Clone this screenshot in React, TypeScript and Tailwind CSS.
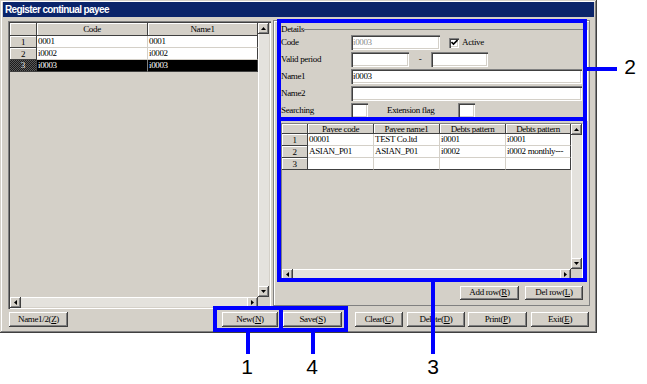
import type { ReactNode } from "react";

const raised =
  "bg-[#d4d0c8] shadow-[inset_-1px_-1px_#404040,inset_1px_1px_#fff,inset_-2px_-2px_#808080]";
const sunken =
  "bg-white shadow-[inset_1px_1px_#808080,inset_2px_2px_#404040,inset_-1px_-1px_#fff,inset_-2px_-2px_#d4d0c8]";
const serif = "font-['Liberation_Serif',serif] text-[9px] tracking-[-0.35px]";

function Arrow({ dir }: { dir: "up" | "down" | "left" | "right" }) {
  const pts = {
    up: "2.5,0 5,3 0,3",
    down: "0,0 5,0 2.5,3",
    left: "3,0 3,5 0,2.5",
    right: "0,0 3,2.5 0,5",
  }[dir];
  const vertical = dir === "up" || dir === "down";
  return (
    <div className={`${raised} w-[11px] h-[11px] shrink-0 flex items-center justify-center`}>
      <svg width={vertical ? 5 : 3} height={vertical ? 3 : 5}>
        <polygon points={pts} fill="#000" />
      </svg>
    </div>
  );
}

function VScroll() {
  return (
    <div className="w-[11px] flex flex-col shrink-0">
      <Arrow dir="up" />
      <div className="flex-1 bg-[#e4e2dd] border-l border-white" />
      <Arrow dir="down" />
    </div>
  );
}

function HScroll() {
  return (
    <div className="flex flex-1 h-full">
      <Arrow dir="left" />
      <div className="flex-1 bg-[#e4e2dd] border-t border-white" />
      <Arrow dir="right" />
    </div>
  );
}

function Btn({ children, className }: { children: ReactNode; className: string }) {
  return (
    <div className={`${raised} ${serif} text-black flex items-center justify-center shrink-0 ${className}`}>
      {children}
    </div>
  );
}

function Head({ children, className }: { children?: ReactNode; className: string }) {
  return (
    <div
      className={`bg-[#d4d0c8] shadow-[inset_1px_1px_#fff] border-r border-b border-[#404040] ${serif} text-black leading-[10px] flex items-center justify-center overflow-hidden shrink-0 ${className}`}
    >
      {children}
    </div>
  );
}

function Cell({ children, className }: { children?: ReactNode; className: string }) {
  return (
    <div
      className={`border-r border-b border-[#d4d0c8] ${serif} text-black leading-[11px] pl-[1px] whitespace-nowrap overflow-hidden shrink-0 ${className}`}
    >
      {children}
    </div>
  );
}

function Field({ children, className }: { children?: ReactNode; className: string }) {
  return (
    <div className={`${sunken} h-[15px] ${serif} leading-[15px] pl-[2px] shrink-0 ${className}`}>
      {children}
    </div>
  );
}

function LeftGrid() {
  const rows = [
    { n: "1", code: "0001", name: "0001" },
    { n: "2", code: "i0002", name: "i0002" },
  ];
  return (
    <div className="ml-[5px] mt-[1px] w-[263px] h-[288px] p-[2px] shadow-[inset_1px_1px_#808080,inset_2px_2px_#404040,inset_-1px_-1px_#fff,inset_-2px_-2px_#d4d0c8] flex flex-col">
      <div className="flex flex-1">
        <div className="flex-1 flex flex-col">
          <div className="flex h-[13px]">
            <Head className="w-[27px] h-[13px]" />
            <Head className="w-[111px] h-[13px]">Code</Head>
            <Head className="w-[110px] h-[13px]">Name1</Head>
          </div>
          {rows.map((r) => (
            <div key={r.n} className="flex h-[12px]">
              <Head className="w-[27px] h-[12px]">{r.n}</Head>
              <Cell className="w-[111px] h-[12px] bg-white">{r.code}</Cell>
              <Cell className="w-[110px] h-[12px] bg-white border-r-[#404040]">{r.name}</Cell>
            </div>
          ))}
          <div className="flex h-[12px]">
            <div className="w-[27px] h-[12px] bg-[image:repeating-conic-gradient(#1a1a1a_0%_25%,#5a5a5a_0%_50%)] bg-[length:2px_2px] border-r border-b border-[#404040] font-['Liberation_Serif',serif] text-[9px] text-[#e8e8e8] leading-[11px] text-center">
              3
            </div>
            <div className="w-[111px] h-[12px] bg-black border-r border-b border-[#808080] border-b-[#404040] font-['Liberation_Serif',serif] text-[9px] tracking-[-0.35px] text-white leading-[11px] pl-[1px]">
              i0003
            </div>
            <div className="w-[110px] h-[12px] bg-black border-r border-b border-[#404040] font-['Liberation_Serif',serif] text-[9px] tracking-[-0.35px] text-white leading-[11px] pl-[1px]">
              i0003
            </div>
          </div>
        </div>
        <VScroll />
      </div>
      <div className="flex h-[10px]">
        <HScroll />
        <div className="w-[11px] bg-[#d4d0c8]" />
      </div>
    </div>
  );
}

function RightGrid() {
  const rows = [
    ["1", "00001", "TEST Co.ltd", "i0001", "i0001"],
    ["2", "ASIAN_P01", "ASIAN_P01", "i0002", "i0002 monthly---"],
    ["3", "", "", "", ""],
  ];
  return (
    <div className="ml-[7px] mt-[3px] w-[302px] h-[156px] border border-t-[#808080] border-l-[#808080] border-r-white border-b-white flex flex-col">
      <div className="flex flex-1">
        <div className="flex-1 flex flex-col">
          <div className="flex h-[10px]">
            <Head className="w-[26px] h-[10px]" />
            <Head className="w-[66px] h-[10px]">Payee code</Head>
            <Head className="w-[66px] h-[10px]">Payee name1</Head>
            <Head className="w-[66px] h-[10px]">Debts pattern</Head>
            <Head className="w-[65px] h-[10px]">Debts pattern</Head>
          </div>
          {rows.map((r, i) => (
            <div key={r[0]} className="flex h-[12px]">
              <Head className="w-[26px] h-[12px]">{r[0]}</Head>
              {r.slice(1).map((c, j) => (
                <Cell
                  key={j}
                  className={`h-[12px] bg-white ${j === 3 ? "w-[65px] border-r-[#404040]" : "w-[66px]"} ${i === 2 ? "border-b-[#404040]" : ""}`}
                >
                  {c}
                </Cell>
              ))}
            </div>
          ))}
        </div>
        <VScroll />
      </div>
      <div className="flex h-[9px]">
        <HScroll />
        <div className="w-[11px] bg-[#d4d0c8]" />
      </div>
    </div>
  );
}

function Details() {
  return (
    <fieldset className="ml-[5px] mt-[3px] w-[308px] border border-[#808080] shadow-[1px_1px_#fff] px-[1px] pb-[1px]">
      <legend className={`${serif} text-black leading-[10px]`}>Details</legend>
      <div className="mt-[1px] flex flex-col gap-[2px]">
        <div className="flex items-center h-[15px]">
          <div className={`${serif} text-black w-[70px]`}>Code</div>
          <Field className="w-[89px] text-[#8a8a8a]">i0003</Field>
          <div className={`${sunken} ml-[9px] w-[10px] h-[10px] flex items-center justify-center`}>
            <svg width="7" height="7" viewBox="0 0 7 7">
              <path d="M0.5 3 L2.5 5 L6.5 1" stroke="#000" strokeWidth="1.6" fill="none" />
            </svg>
          </div>
          <div className={`${serif} text-black ml-[3px]`}>Active</div>
        </div>
        <div className="flex items-center h-[15px]">
          <div className={`${serif} text-black w-[70px]`}>Valid period</div>
          <Field className="w-[58px]" />
          <div className={`${serif} text-black w-[22px] text-center`}>-</div>
          <Field className="w-[57px]" />
        </div>
        <div className="flex items-center h-[15px]">
          <div className={`${serif} text-black w-[70px]`}>Name1</div>
          <Field className="w-[231px] text-black">i0003</Field>
        </div>
        <div className="flex items-center h-[15px]">
          <div className={`${serif} text-black w-[70px]`}>Name2</div>
          <Field className="w-[231px]" />
        </div>
        <div className="flex items-center h-[15px]">
          <div className={`${serif} text-black w-[70px]`}>Searching</div>
          <Field className="w-[17px]" />
          <div className={`${serif} text-black ml-[19px] w-[71px]`}>Extension flag</div>
          <Field className="w-[17px]" />
        </div>
      </div>
    </fieldset>
  );
}

export default function App() {
  return (
    <div className="w-[647px] h-[384px] bg-white relative overflow-hidden">
      {/* Dialog window */}
      <div className="w-[597px] h-[333px] bg-[#d4d0c8] pt-[2px] px-[3px] flex flex-col shadow-[inset_-1px_-1px_#404040,inset_1px_1px_#d4d0c8,inset_-2px_-2px_#808080,inset_2px_2px_#fff]">
        <div className="h-[15px] bg-[#0a246a] pl-[2px] flex items-center font-['Liberation_Sans',Arial,sans-serif] font-bold text-[10px] tracking-[-0.6px] text-white">
          Register continual payee
        </div>

        <div className="flex items-start pt-[3px] h-[292px]">
          <LeftGrid />

          {/* Right frame */}
          <div className="ml-[2px] w-[317px] h-[286px] border border-[#808080] shadow-[inset_1px_1px_#fff] flex flex-col">
            <Details />
            <RightGrid />
            <div className="flex mt-[7px]">
              <Btn className="ml-[186px] w-[59px] h-[14px]">
                Add row(<u>R</u>)
              </Btn>
              <Btn className="ml-[6px] w-[58px] h-[14px]">
                Del row(<u>L</u>)
              </Btn>
            </div>
          </div>
        </div>

        {/* Bottom buttons */}
        <div className="flex mt-[3px] h-[15px]">
          <Btn className="ml-[6px] w-[59px] h-[15px]">
            Name1/2(<u>Z</u>)
          </Btn>
          <Btn className="ml-[154px] w-[56px] h-[15px]">
            New(<u>N</u>)
          </Btn>
          <Btn className="ml-[5px] w-[59px] h-[15px]">
            Save(<u>S</u>)
          </Btn>
          <Btn className="ml-[13px] w-[48px] h-[15px]">
            Clear(<u>C</u>)
          </Btn>
          <Btn className="ml-[4px] w-[58px] h-[15px]">
            Delete(<u>D</u>)
          </Btn>
          <Btn className="ml-[3px] w-[59px] h-[15px]">
            Print(<u>P</u>)
          </Btn>
          <Btn className="ml-[4px] w-[58px] h-[15px]">
            Exit(<u>E</u>)
          </Btn>
        </div>
      </div>

      {/* Callout annotations */}
      <div className="absolute left-[277px] top-[19px] w-[310px] h-[102px] border-4 border-[#0000ff]" />
      <div className="absolute left-[277px] top-[117px] w-[310px] h-[165px] border-4 border-[#0000ff]" />
      <div className="absolute left-[587px] top-[67px] w-[30px] h-[4px] bg-[#0000ff]" />
      <div className="absolute left-[213px] top-[306px] w-[70px] h-[26px] border-4 border-[#0000ff]" />
      <div className="absolute left-[279px] top-[306px] w-[69px] h-[26px] border-4 border-[#0000ff]" />
      <div className="absolute left-[246px] top-[332px] w-[4px] h-[22px] bg-[#0000ff]" />
      <div className="absolute left-[311px] top-[332px] w-[4px] h-[22px] bg-[#0000ff]" />
      <div className="absolute left-[431px] top-[282px] w-[4px] h-[72px] bg-[#0000ff]" />

      <div className="absolute left-[620px] top-[56px] w-[20px] text-center font-['Liberation_Sans',Arial,sans-serif] text-[21px] leading-none text-black">
        2
      </div>
      <div className="absolute left-[237px] top-[356px] w-[20px] text-center font-['Liberation_Sans',Arial,sans-serif] text-[21px] leading-none text-black">
        1
      </div>
      <div className="absolute left-[302px] top-[356px] w-[20px] text-center font-['Liberation_Sans',Arial,sans-serif] text-[21px] leading-none text-black">
        4
      </div>
      <div className="absolute left-[423px] top-[356px] w-[20px] text-center font-['Liberation_Sans',Arial,sans-serif] text-[21px] leading-none text-black">
        3
      </div>
    </div>
  );
}
